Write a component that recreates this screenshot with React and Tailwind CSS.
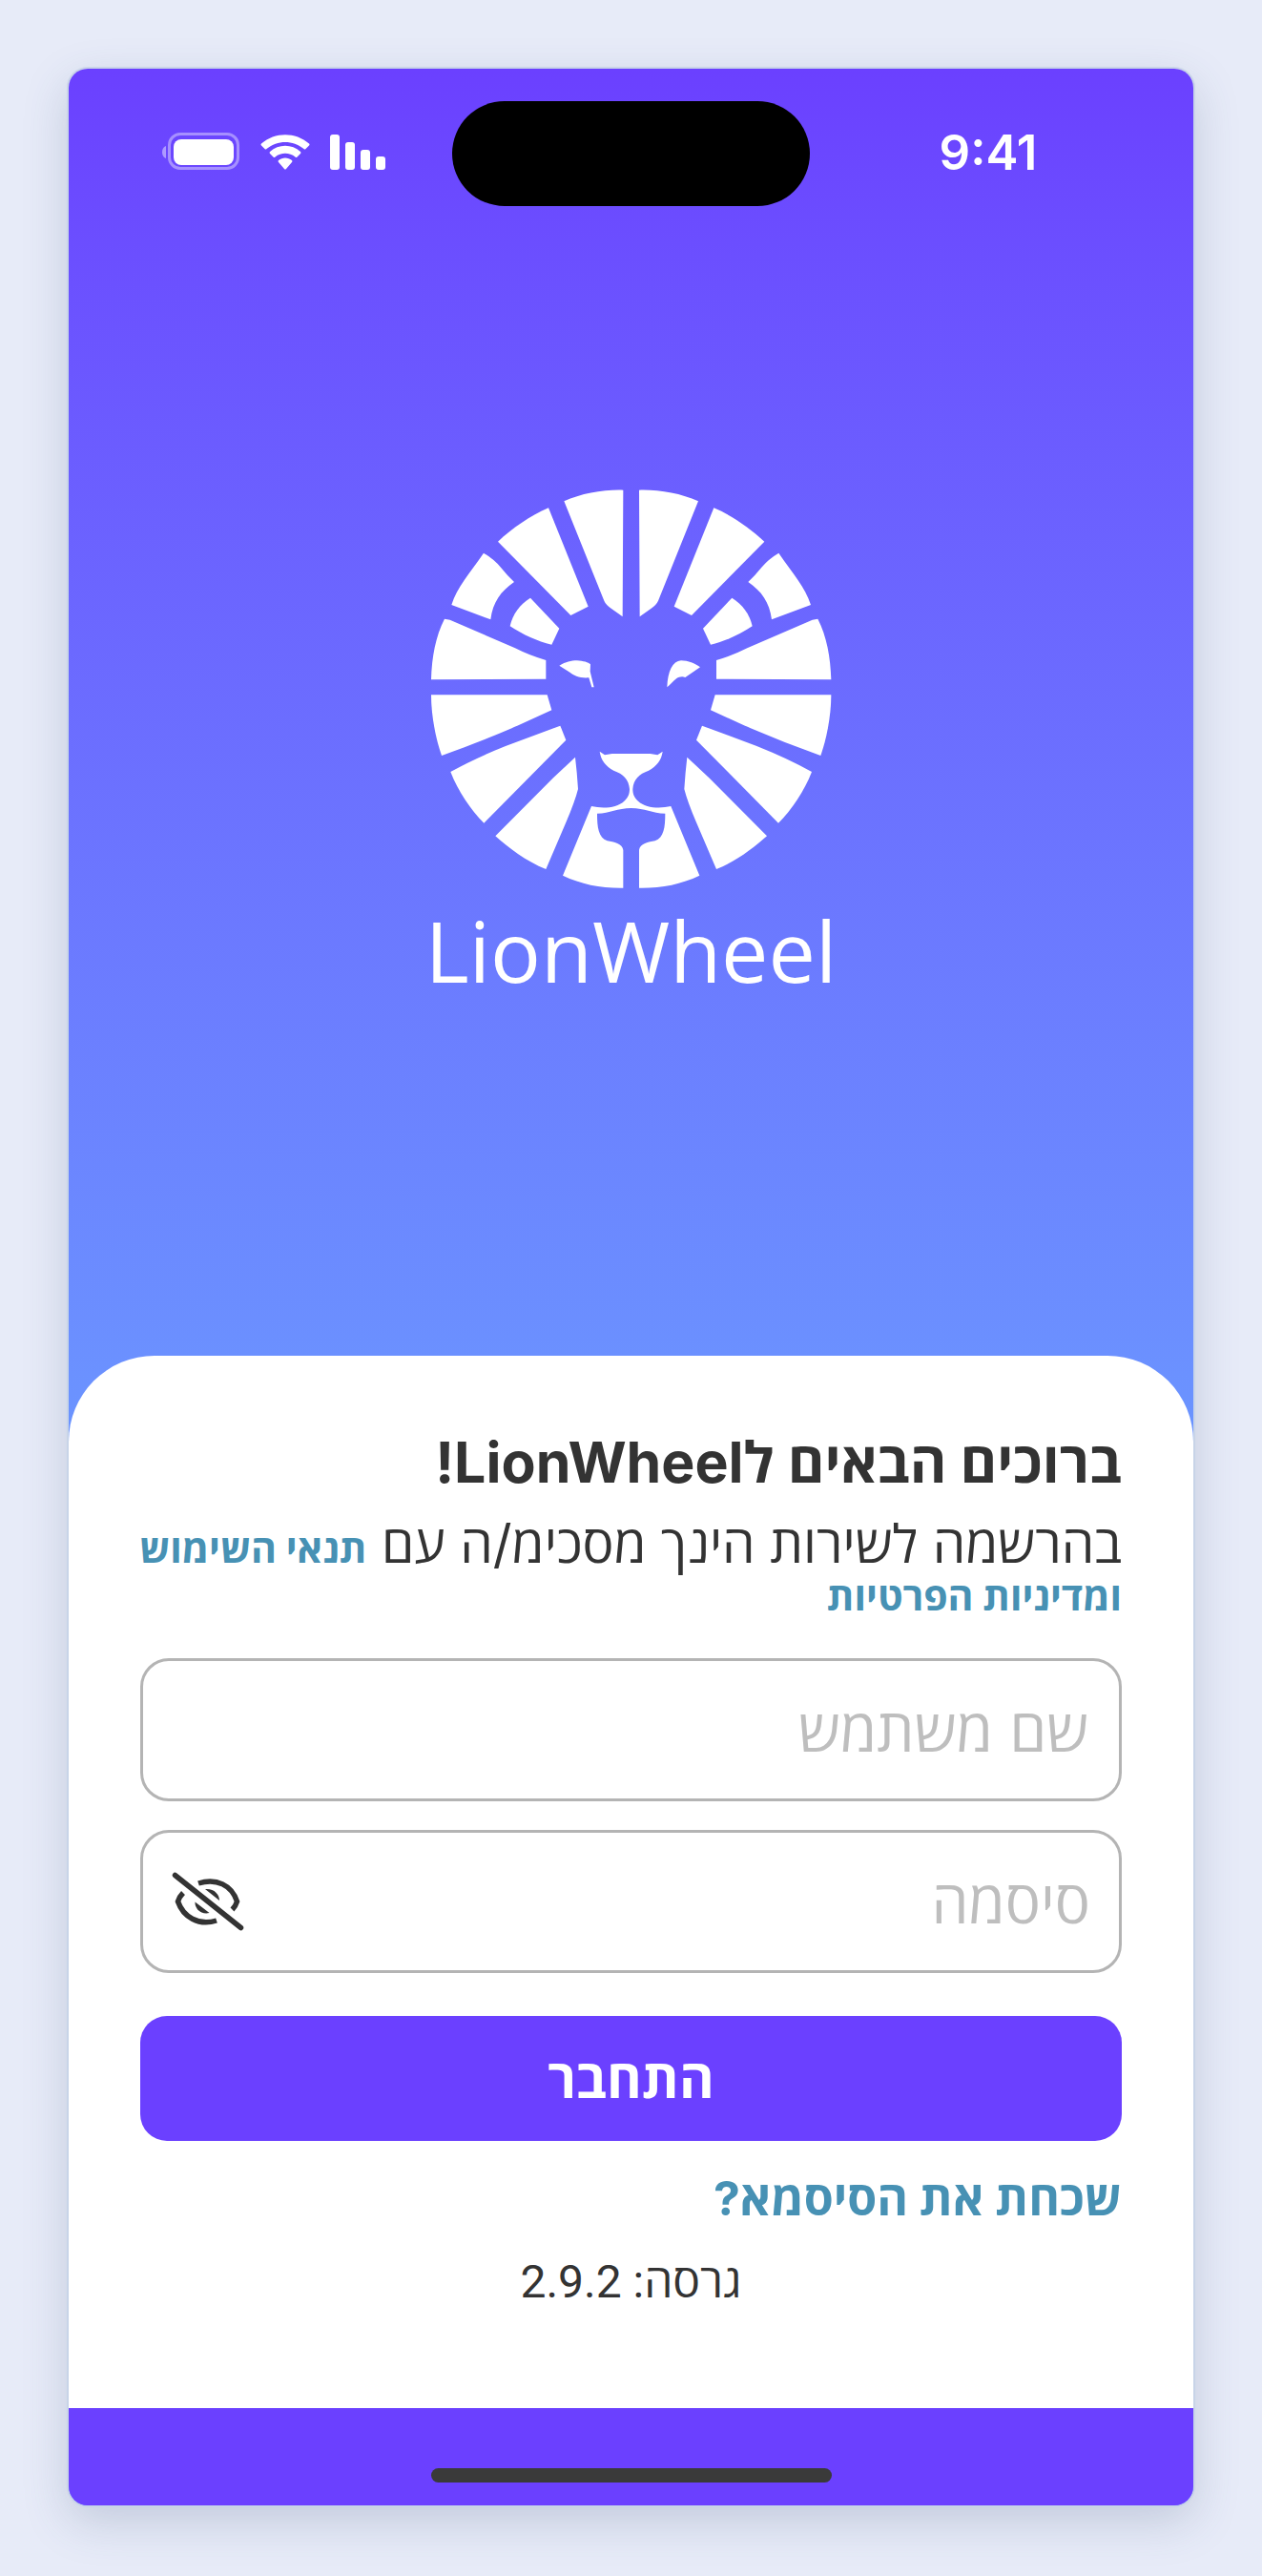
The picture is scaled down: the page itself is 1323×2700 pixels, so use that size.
import React, { useState } from 'react';

const LionHalf = () => (
  <>
    <path d="M484 75C540 50 610 38 670 40L668 438L632 412Q615 400 610 388Z" />
    <path d="M276 202C322 160 378 120 435 96L560 406L505 434Z" />
    <path d="M231 238Q262 256 285 283Q305 308 327 329C285 358 260 392 253 447L130 401C148 345 185 305 231 238Z" />
    <path d="M378 379L469 475L445 526C400 516 355 495 314 468C322 430 345 400 378 379Z" />
    <path d="M108 445L125 448L330 537Q375 560 427 575V634L66 636C68 565 80 500 108 445Z" />
    <path d="M66 684H431L445 732L340 780Q220 832 99 875C80 820 66 750 66 684Z" />
    <path d="M472 781L490 826L232 1087C190 1045 150 985 127 926Q200 885 300 845Z" />
    <path d="M519 880Q525 930 528 980Q518 1020 490 1085L427 1232C365 1208 310 1165 268 1128L450 945Z" />
    <path d="M570 1034C605 1042 650 1040 673 1018C686 1006 690 995 690 980C688 950 670 932 640 922C615 908 600 890 596 862L612 873L635 869H696V1040C650 1040 630 1057 588 1057C588 1100 592 1132 620 1143C640 1146 668 1152 670 1172V1291C600 1292 540 1280 480 1252Z" />
  </>
);

const LionLogo = () => (
  <svg viewBox="66 36 1260 1258" className="w-[420px] h-[420px]" fill="#fff" aria-hidden="true">
    <LionHalf />
    <g transform="matrix(-1 0 0 1 1390 0)">
      <LionHalf />
    </g>
    <path d="M469 592C490 580 505 576 525 576C545 577 560 582 567 588L566 610L578 660H571L562 630C535 632 515 625 500 612Z" />
    <path d="M808 660C810 610 825 578 852 576C875 576 895 585 912 597L865 629C855 625 845 628 838 632C825 642 818 652 808 660Z" />
  </svg>
);

const StatusIcons = () => (
  <svg viewBox="0 0 236 40" className="w-[236px] h-10" fill="#fff" aria-hidden="true">
    <path d="M5 14C2 15 1 18 1 20.500C1 23 2 26 5 27Z" opacity=".45" />
    <rect x="8.500" y="1.500" width="72" height="36" rx="11.500" fill="none" stroke="#fff" strokeWidth="3" opacity=".4" />
    <rect x="13" y="7" width="63" height="27" rx="8" />
    <path d="M105 11.500C119-1 141-1 155 11.500Q156 12.500 155 13.500L151.500 17Q150.500 18 149.500 17C138 7.500 122 7.500 110.500 17Q109.500 18 108.500 17L105 13.500Q104 12.500 105 11.500Z" />
    <path d="M114 20C123 11.500 137 11.500 146 20Q147 21 146 22L142.500 25.500Q141.500 26.500 140.500 25.500C134.500 20.500 125.500 20.500 119.500 25.500Q118.500 26.500 117.500 25.500L114 22Q113 21 114 20Z" />
    <path d="M123 29C127 25.500 133 25.500 137 29Q138 30 137 31L131 38Q130 39 129 38L123 31Q122 30 123 29Z" />
    <rect x="177" y="2" width="10" height="37" rx="3" />
    <rect x="193" y="10" width="10" height="29" rx="3" />
    <rect x="209" y="18" width="10" height="21" rx="3" />
    <rect x="225" y="25" width="10" height="14" rx="3" />
  </svg>
);

const EyeOffIcon = () => (
  <svg viewBox="0 0 76 62" className="w-[76px] h-[62px]" fill="none" stroke="#333" strokeWidth="5.500" aria-hidden="true">
    <path d="M3.500 3.500L72.500 58.500" strokeLinecap="round" />
    <path d="M28 12C47 6 63 14 68.500 31Q67 36 63.500 39.500" />
    <path d="M12 22Q8 26 6.500 31C12 47 28 57 47 51" />
    <path d="M35 18C44 17 50 23 50 30Z" fill="#333" stroke="none" />
    <path d="M24.500 31.500C24 39 31 45 39.500 43Z" fill="#333" stroke="none" />
  </svg>
);

const Login = () => {
  const [username, setUsername] = useState('');
  const [password, setPassword] = useState('');
  const [showPassword, setShowPassword] = useState(false);

  return (
    <div className="min-h-screen bg-[#e7ebf8] p-18 font-['Inter','Open_Sans','Liberation_Sans',sans-serif]">
      <div
        dir="rtl"
        className="overflow-hidden rounded-[20px] bg-linear-to-b from-[#6b40ff] to-[#6b95ff] to-[1450px] shadow-[0_0_0_2px_#c8d4e8,0_16px_48px_rgba(60,80,120,0.22)]"
      >
        {/* Status bar */}
        <div className="flex items-center pt-[34px]">
          <div className="flex-1 ps-7 pb-1 text-center text-[51px] leading-none font-semibold text-white">9:41</div>
          <div className="h-[110px] w-[375px] rounded-full bg-black" />
          <div className="flex flex-1 justify-center pe-7 pb-1">
            <StatusIcons />
          </div>
        </div>

        {/* Logo */}
        <div className="flex flex-col items-center pt-[296px] pb-[377px]">
          <LionLogo />
          <p dir="ltr" className="mt-4 font-['Open_Sans',sans-serif] text-[88px] leading-[96px] text-white">
            LionWheel
          </p>
        </div>

        {/* Login form */}
        <div className="rounded-t-[90px] bg-white px-[75px] pt-[76px] pb-24 text-[#333]">
          <h1 className="text-[59px] leading-[72px] font-bold">ברוכים הבאים לLionWheel!</h1>
          <p className="-me-4 mt-6 text-[55px] leading-[50px]">
            בהרשמה לשירות הינך מסכימ/ה עם{' '}
            <a href="#terms" className="text-[41px] font-bold whitespace-nowrap text-[#4791b4]">תנאי השימוש</a>
            <a href="#privacy" className="block text-[41px] font-bold text-[#4791b4]">ומדיניות הפרטיות</a>
          </p>

          <form className="mt-10" onSubmit={(e) => e.preventDefault()}>
            <input
              type="text"
              aria-label="שם משתמש"
              placeholder="שם משתמש"
              value={username}
              onChange={(e) => setUsername(e.target.value)}
              className="block h-[150px] w-full rounded-[30px] border-3 border-[#b4b4b4] px-8 text-[62px] placeholder:text-[#bebebe]"
            />
            <div className="mt-[30px] flex h-[150px] items-center rounded-[30px] border-3 border-[#b4b4b4] px-[30px]">
              <input
                type={showPassword ? 'text' : 'password'}
                aria-label="סיסמה"
                placeholder="סיסמה"
                value={password}
                onChange={(e) => setPassword(e.target.value)}
                className="h-full min-w-0 flex-1 text-[62px] outline-none placeholder:text-[#bebebe]"
              />
              <button type="button" aria-label="הצג סיסמה" onClick={() => setShowPassword(!showPassword)}>
                <EyeOffIcon />
              </button>
            </div>
            <button
              type="submit"
              className="mt-[45px] h-[131px] w-full rounded-[28px] bg-[#6b40ff] text-[56px] font-bold text-white"
            >
              התחבר
            </button>
          </form>

          <a href="#forgot" className="mt-6 block w-fit text-[50px] leading-[72px] font-bold text-[#4791b4]">שכחת את הסיסמא?</a>
          <p className="mt-4 text-center font-['Roboto','Open_Sans',sans-serif] text-[48px] leading-[72px]">גרסה: 2.9.2</p>
        </div>

        {/* Home indicator */}
        <div className="flex justify-center bg-[#6b40ff] pt-[63px] pb-6">
          <div className="h-[15px] w-[420px] rounded-full bg-[#3a3a3a]" />
        </div>
      </div>
    </div>
  );
};

export default function App() {
  return <Login />;
}
